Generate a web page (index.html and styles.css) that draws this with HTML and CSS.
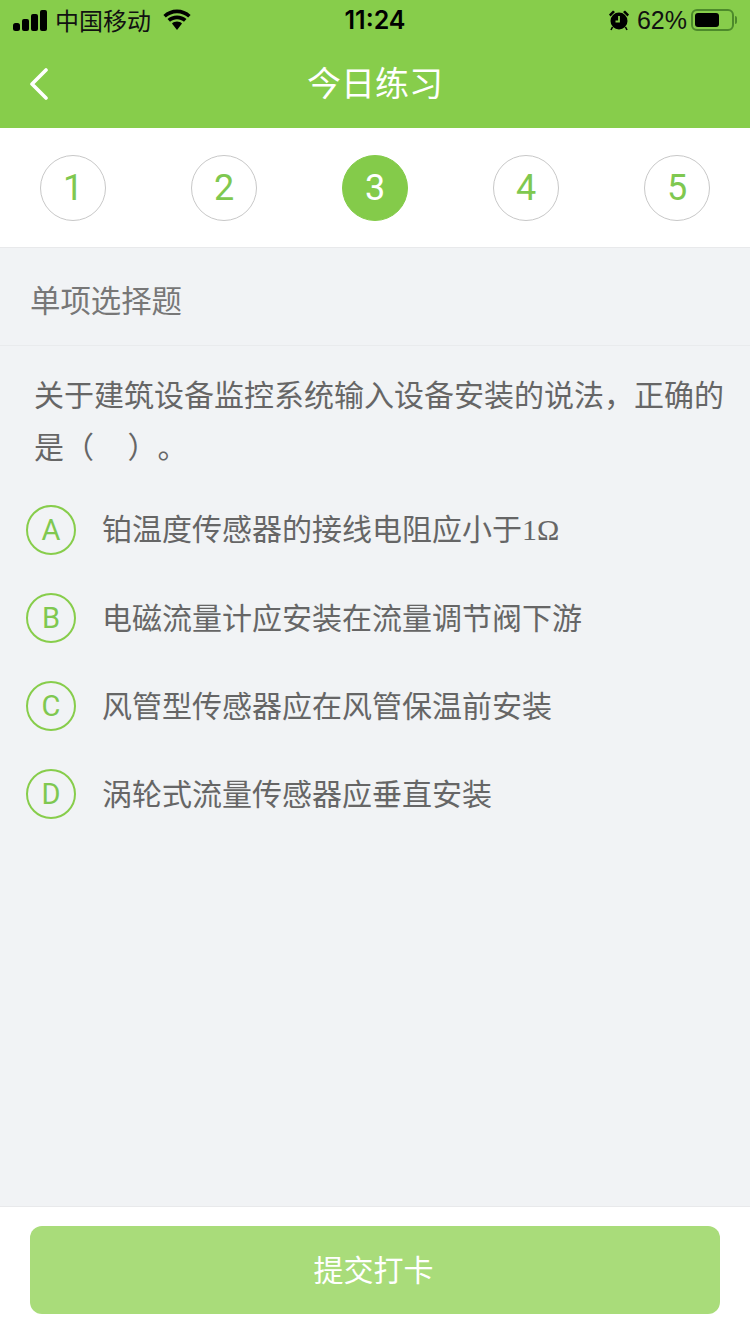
FILE: index.html
```html
<!DOCTYPE html>
<html lang="zh-CN">
<head>
<meta charset="utf-8">
<title>今日练习</title>
<link rel="stylesheet" href="styles.css">
</head>
<body>
<div class="page">
  <header class="header">
    <div class="status">
      <div class="status-left">
        <svg class="signal" width="35" height="21" viewBox="0 0 35 21"><rect x="0" y="13" width="7" height="8" rx="2.500"/><rect x="9" y="9" width="7" height="12" rx="2"/><rect x="18" y="4" width="7" height="17" rx="2"/><rect x="27" y="0" width="7" height="21" rx="2"/></svg>
        <span class="carrier">中国移动</span>
        <svg class="wifi" width="30" height="22" viewBox="0 0 30 22"><path d="M15 4.200c4.300 0 8.200 1.600 11.200 4.300l2.400-2.600C24.900 2.600 20.200.6 15 .6S5.100 2.600 1.400 5.900l2.400 2.600C6.800 5.800 10.700 4.200 15 4.200z"/><path d="M15 10.200c2.700 0 5.100 1 7 2.600l2.500-2.700C22 7.900 18.600 6.600 15 6.600s-7 1.300-9.500 3.500L8 12.800c1.900-1.600 4.300-2.600 7-2.600z"/><path d="M15 12.600c-1.900 0-3.700.7-5 1.900l5 6.500 5-6.500c-1.300-1.200-3.100-1.900-5-1.900z"/></svg>
      </div>
      <div class="time">11:24</div>
      <div class="status-right">
        <svg class="alarm" width="22" height="22" viewBox="0 0 22 22"><circle cx="11" cy="12" r="8.500"/><path d="M1 5.500 5 1.500 7 3 2.500 7.500zM21 5.500 17 1.500 15 3l4.500 4.500z"/><path class="alarm-hand" d="M11 7v5.500H7.500" fill="none" stroke-width="1.800"/><path d="M4.500 18 3 21M17.500 18l1.500 3" stroke="#000" stroke-width="1.600"/></svg>
        <span class="percent">62%</span>
        <div class="battery"><div class="battery-level"></div></div>
        <div class="battery-cap"></div>
      </div>
    </div>
    <div class="nav">
      <svg class="back" width="20" height="32" viewBox="0 0 20 32"><path d="M17 2 3 16l14 14" fill="none" stroke="#fff" stroke-width="3.600" stroke-linecap="round" stroke-linejoin="round"/></svg>
      <h1 class="title">今日练习</h1>
    </div>
  </header>

  <nav class="steps">
    <div class="step">1</div>
    <div class="step">2</div>
    <div class="step step-active">3</div>
    <div class="step">4</div>
    <div class="step">5</div>
  </nav>

  <main class="content">
    <div class="type">单项选择题</div>
    <p class="question">关于建筑设备监控系统输入设备安装的说法，正确的是（&nbsp;&nbsp;&nbsp;&nbsp;&nbsp;）。</p>
    <ul class="options">
      <li class="option"><span class="letter">A</span><span class="option-text">铂温度传感器的接线电阻应小于<span class="latin">1Ω</span></span></li>
      <li class="option"><span class="letter">B</span><span class="option-text">电磁流量计应安装在流量调节阀下游</span></li>
      <li class="option"><span class="letter">C</span><span class="option-text">风管型传感器应在风管保温前安装</span></li>
      <li class="option"><span class="letter">D</span><span class="option-text">涡轮式流量传感器应垂直安装</span></li>
    </ul>
  </main>

  <footer class="footer">
    <button class="submit" type="button">提交打卡</button>
  </footer>
</div>
</body>
</html>
```

FILE: styles.css
```css
* { box-sizing: border-box; }
html, body { margin: 0; padding: 0; }
body {
  font-family: "Noto Sans CJK SC", "Liberation Sans", sans-serif;
  background: #f1f3f5;
}
.page {
  width: 750px;
  height: 1334px;
  display: flex;
  flex-direction: column;
  overflow: hidden;
}
.header { background: #87cd4b; height: 128px; flex: none; }
.status {
  height: 40px;
  padding: 0 13px;
  display: grid;
  grid-template-columns: 1fr auto 1fr;
  align-items: center;
  color: #000;
}
.status-left { display: flex; align-items: center; }
.signal { margin-right: 7px; }
.carrier { font-size: 24px; line-height: 40px; color: #111; }
.wifi { margin-left: 11px; }
.time { font-family: Inter, "Liberation Sans", sans-serif; font-size: 25px; font-weight: 600; }
.status-right { display: flex; align-items: center; justify-content: flex-end; }
.alarm { margin-right: 7px; }
.alarm-hand { stroke: #87cd4b; }
.percent { font-family: "Liberation Sans", sans-serif; font-size: 25px; margin-right: 4px; color: #111; }
.battery {
  width: 43px;
  height: 22px;
  border: 2px solid #4d8a2b;
  border-radius: 6px;
  padding: 2px;
}
.battery-level { width: 24px; height: 100%; background: #000; border-radius: 3px; }
.battery-cap { width: 2px; height: 8px; background: #4d8a2b; border-radius: 0 2px 2px 0; margin-left: 1px; }
.nav {
  height: 88px;
  position: relative;
  display: flex;
  align-items: center;
  justify-content: center;
}
.back { position: absolute; left: 29px; top: 28px; }
.title { margin: 0; font-size: 34px; font-weight: 400; color: #fff; line-height: 84px; height: 88px; }

.steps {
  height: 120px;
  flex: none;
  background: #fff;
  border-bottom: 1px solid #e8e9eb;
  padding: 0 40px;
  display: flex;
  align-items: center;
  justify-content: space-between;
}
.step {
  width: 66px;
  height: 66px;
  border: 1px solid #c8c8c8;
  border-radius: 50%;
  display: flex;
  align-items: center;
  justify-content: center;
  font-family: Roboto, "Liberation Sans", sans-serif;
  font-size: 36px;
  color: #7fc850;
}
.step-active { background: #84cb4a; border-color: #84cb4a; color: #fff; }

.content { flex: 1; min-height: 0; }
.type {
  height: 98px;
  padding-left: 30px;
  border-bottom: 1px solid #e9ebed;
  font-size: 30.400px;
  line-height: 102px;
  color: #777;
}
.question {
  margin: 0;
  padding: 21px 20px 0 34px;
  font-size: 30px;
  line-height: 52px;
  color: #666;
  text-spacing-trim: space-all;
}
.options { list-style: none; margin: 15px 0 0; padding: 0 0 0 26px; }
.option { height: 88px; display: flex; align-items: center; }
.letter {
  width: 50px;
  height: 50px;
  flex: none;
  border: 2px solid #87cd4b;
  border-radius: 50%;
  display: flex;
  align-items: center;
  justify-content: center;
  font-family: Roboto, "Liberation Sans", sans-serif;
  font-size: 29px;
  color: #7fc850;
}
.option-text { margin-left: 26px; margin-top: -4px; font-size: 30px; line-height: 44px; color: #666; }
.latin { font-family: "Liberation Serif", serif; }

.footer {
  height: 128px;
  flex: none;
  background: #fff;
  border-top: 1px solid #e8e9eb;
  padding: 19px 30px 0;
}
.submit {
  display: block;
  width: 690px;
  height: 88px;
  border: 0;
  border-radius: 12px;
  padding: 0 3px 4px 0;
  background: #a9dc7a;
  color: #fff;
  font-family: inherit;
  font-size: 30px;
}
```
